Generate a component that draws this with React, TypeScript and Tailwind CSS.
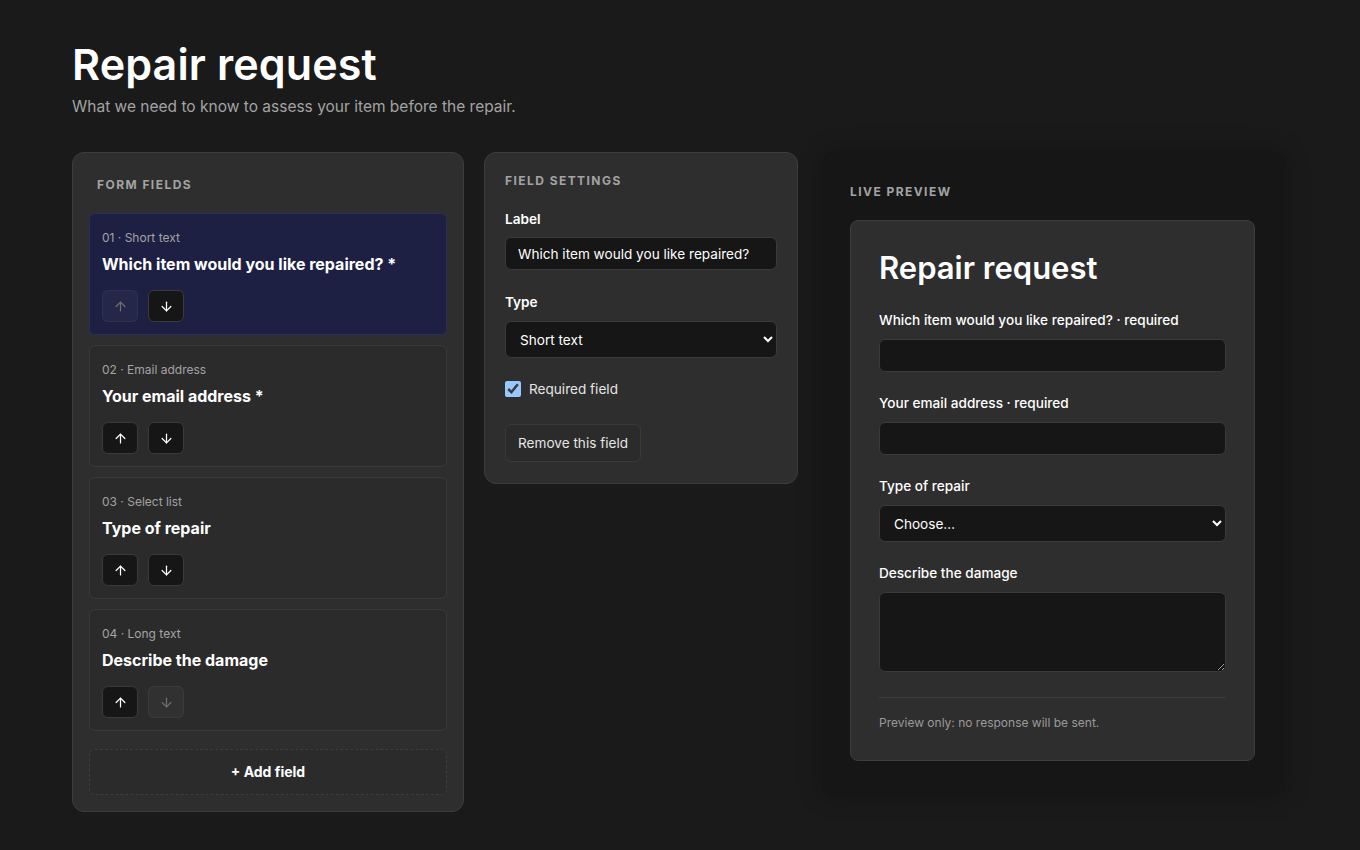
import React from "react";
import { ArrowUp, ArrowDown } from "lucide-react";

type Field = { n: string; kind: string; label: string; req: boolean; active?: boolean; upDisabled?: boolean; downDisabled?: boolean };

const fields: Field[] = [
  { n: "01", kind: "Short text", label: "Which item would you like repaired?", req: true, active: true, upDisabled: true },
  { n: "02", kind: "Email address", label: "Your email address", req: true },
  { n: "03", kind: "Select list", label: "Type of repair", req: false },
  { n: "04", kind: "Long text", label: "Describe the damage", req: false, downDisabled: true },
];

function MoveBtn({ dir, disabled }: { dir: "up" | "down"; disabled?: boolean }) {
  const Icon = dir === "up" ? ArrowUp : ArrowDown;
  return (
    <button
      className={
        "w-9 h-8 flex items-center justify-center rounded-md border " +
        (disabled
          ? "bg-white/[0.03] border-white/[0.05] text-[#6e6e6e]"
          : "bg-[#161616] border-[#3a3a3a] text-white")
      }
    >
      <Icon size={15} strokeWidth={2} />
    </button>
  );
}

function FieldCard({ f }: { f: Field }) {
  return (
    <div
      className={
        "rounded-md border px-3 pt-4 pb-3 " +
        (f.active ? "bg-[#1d2042] border-[#2a2e58]" : "bg-[#2b2b2b] border-[#3a3a3a]")
      }
    >
      <div className="text-xs text-[#a3a3a3] leading-4">
        {f.n} · {f.kind}
      </div>
      <div className="mt-[6px] text-base font-bold text-white leading-6">
        {f.label}
        {f.req ? " *" : ""}
      </div>
      <div className="mt-[14px] flex gap-2.5">
        <MoveBtn dir="up" disabled={f.upDisabled} />
        <MoveBtn dir="down" disabled={f.downDisabled} />
      </div>
    </div>
  );
}

export default function App() {
  return (
    <div
      className="min-h-[850px] bg-[#1a1a1a] text-white [color-scheme:dark]"
      style={{ fontFamily: "Inter, 'Noto Sans', sans-serif" }}
    >
      <div className="pl-[72px] pt-[40px]">
        <h1 className="text-[43px] font-semibold leading-[48px] tracking-[0.003em] text-white">Repair request</h1>
        <p className="mt-[7px] text-[15.5px] text-[#a3a3a3] leading-6">
          What we need to know to assess your item before the repair.
        </p>

        <div className="mt-[33px] flex items-start">
          {/* Form fields */}
          <section className="w-[392px] rounded-xl border border-[#3d3d3d] bg-[#2e2e2e] px-4 pt-6 pb-4">
            <h2 className="px-2 text-xs font-bold tracking-[0.12em] text-[#a3a3a3] leading-4">FORM FIELDS</h2>
            <div className="mt-[20px] flex flex-col gap-2.5">
              {fields.map((f) => (
                <FieldCard key={f.n} f={f} />
              ))}
            </div>
            <button className="mt-[18px] w-full h-[46px] rounded-md border border-dashed border-[#3d3d3d] bg-[#2b2b2b] text-sm font-bold text-white">
              + Add field
            </button>
          </section>

          {/* Field settings */}
          <section className="ml-[20px] w-[314px] rounded-xl border border-[#3d3d3d] bg-[#2e2e2e] px-5 pt-5 pb-[21px]">
            <h2 className="text-xs font-bold tracking-[0.12em] text-[#a3a3a3] leading-4">FIELD SETTINGS</h2>
            <label className="mt-[20px] block text-[13.6px] font-semibold leading-5">Label</label>
            <input
              className="mt-[8px] w-full h-[33px] rounded-md border border-[#3a3a3a] bg-[#161616] px-3 text-[13.6px] text-white outline-none"
              defaultValue="Which item would you like repaired?"
            />
            <label className="mt-[22px] block text-[13.6px] font-semibold leading-5">Type</label>
            <select
              className="mt-[9px] w-full h-[37px] rounded-md border border-[#3a3a3a] bg-[#161616] px-2.5 text-[13.6px] text-white outline-none"
              defaultValue="Short text"
            >
              <option>Short text</option>
              <option>Email address</option>
              <option>Select list</option>
              <option>Long text</option>
            </select>
            <label className="mt-[21px] flex items-center gap-2 text-[13.6px] text-[#e5e5e5] leading-5">
              <input type="checkbox" defaultChecked className="w-4 h-4 m-0 accent-[#99c8ff]" />
              Required field
            </label>
            <button className="mt-[25px] h-[38px] px-3 rounded-md border border-[#3a3a3a] bg-[#2b2b2b] text-[13.6px] text-[#e5e5e5]">
              Remove this field
            </button>
          </section>

          {/* Live preview */}
          <section className="ml-[24px] w-[463px] rounded-xl bg-[#161616] shadow-[0_0_24px_rgba(0,0,0,0.25)] pl-7 pr-[30px] pt-8 pb-[35px]">
            <h2 className="text-xs font-bold tracking-[0.12em] text-[#a3a3a3] leading-4">LIVE PREVIEW</h2>
            <div className="mt-[20px] rounded-lg border border-[#3d3d3d] bg-[#2e2e2e] px-7 pt-[29px] pb-[29px]">
              <h3 className="text-[31px] font-semibold leading-9">Repair request</h3>
              <div className="mt-[24px] text-[13.6px] font-medium leading-5">Which item would you like repaired? · required</div>
              <input className="mt-[9px] w-full h-[33px] rounded-md border border-[#3a3a3a] bg-[#161616] px-3 text-sm outline-none" />
              <div className="mt-[21px] text-[13.6px] font-medium leading-5">Your email address · required</div>
              <input className="mt-[9px] w-full h-[33px] rounded-md border border-[#3a3a3a] bg-[#161616] px-3 text-sm outline-none" />
              <div className="mt-[21px] text-[13.6px] font-medium leading-5">Type of repair</div>
              <select className="mt-[9px] w-full h-[37px] rounded-md border border-[#3a3a3a] bg-[#161616] px-2.5 text-[13.6px] text-white outline-none">
                <option>Choose…</option>
              </select>
              <div className="mt-[21px] text-[13.6px] font-medium leading-5">Describe the damage</div>
              <textarea className="mt-[9px] block w-full h-[80px] rounded-md border border-[#3a3a3a] bg-[#161616] px-3 py-2 text-sm outline-none" />
              <div className="mt-[25px] border-t border-[#3d3d3d]" />
              <p className="mt-[17px] text-xs text-[#9a9a9a] leading-4">Preview only: no response will be sent.</p>
            </div>
          </section>
        </div>
      </div>
    </div>
  );
}
